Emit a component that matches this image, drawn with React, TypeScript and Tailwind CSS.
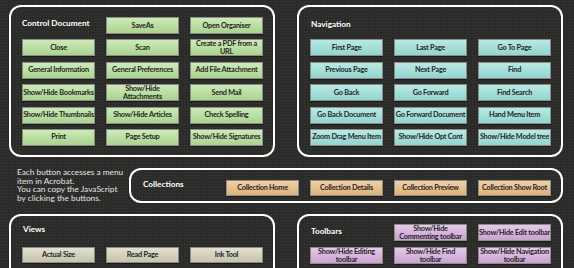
import React from 'react'

type Tone = 'green' | 'cyan' | 'orange' | 'purple' | 'beige'

const tones: Record<Tone, string> = {
  green: 'bg-gradient-to-b from-[#cdeab8] to-[#a9d38f]',
  cyan: 'bg-gradient-to-b from-[#b8e9e5] to-[#93d4cf]',
  orange: 'bg-gradient-to-b from-[#f0d1a8] to-[#ddb07a]',
  purple: 'bg-gradient-to-b from-[#e6c9ea] to-[#c9a2d1]',
  beige: 'bg-gradient-to-b from-[#e2e0cf] to-[#c6c4ae]',
}

const Btn: React.FC<{ label: React.ReactNode; tone: Tone; h?: string }> = ({
  label,
  tone,
  h = 'h-[17px]',
}) => (
  <button
    className={`w-[73px] ${h} ${tones[tone]} border border-[#8c8c86] shadow-[0_1px_0_#1a1a1a] flex items-center justify-center text-center text-[7.3px] leading-[8px] font-bold text-[#262626] tracking-[-0.25px] whitespace-nowrap overflow-hidden`}
    type="button"
  >
    {label}
  </button>
)

const Title: React.FC<{ children: React.ReactNode }> = ({ children }) => (
  <div className="text-[8.2px] font-bold text-white leading-none">{children}</div>
)

const controlDoc: React.ReactNode[] = [
  'Close',
  'Scan',
  <>Create a PDF from a<br />URL</>,
  'General Information',
  'General Preferences',
  'Add File Attachment',
  'Show/Hide Bookmarks',
  <>Show/Hide<br />Attachments</>,
  'Send Mail',
  'Show/Hide Thumbnails',
  'Show/Hide Articles',
  'Check Spelling',
  'Print',
  'Page Setup',
  'Show/Hide Signatures',
]

const navigation = [
  'First Page',
  'Last Page',
  'Go To Page',
  'Previous Page',
  'Next Page',
  'Find',
  'Go Back',
  'Go Forward',
  'Find Search',
  'Go Back Document',
  'Go Forward Document',
  'Hand Menu Item',
  'Zoom Drag Menu Item',
  'Show/Hide Opt Cont',
  'Show/Hide Model tree',
]

const App: React.FC = () => {
  return (
    <div
      className="w-[574px] h-[268px] overflow-hidden bg-[#2b2b29] bg-[radial-gradient(#3a3a37_0.7px,transparent_0.8px)] bg-[length:3px_3px] pl-[9px] pt-[5px] flex flex-col"
      style={{ fontFamily: 'Lato, "Open Sans", sans-serif' }}
    >
      {/* Top row */}
      <div className="flex gap-[22px] h-[152px] shrink-0">
        {/* Control Document */}
        <div className="w-[266px] h-[152px] border-2 border-white rounded-[12px] pt-[10px] pl-[11px]">
          <div className="grid grid-cols-[73px_73px_73px] gap-x-[11px] gap-y-[5.4px]">
            <div className="h-[17px] flex items-center pb-[5px]">
              <Title>Control Document</Title>
            </div>
            <Btn label="SaveAs" tone="green" />
            <Btn label="Open Organiser" tone="green" />
            {controlDoc.map((l, i) => (
              <Btn key={i} label={l} tone="green" />
            ))}
          </div>
        </div>

        {/* Navigation */}
        <div className="w-[266px] h-[152px] border-2 border-white rounded-[12px] pt-[10px] pl-[11px]">
          <div className="grid grid-cols-[73px_73px_73px] gap-x-[11px] gap-y-[5.4px]">
            <div className="h-[17px] flex items-center pb-[3px] pl-[1px]">
              <Title>Navigation</Title>
            </div>
            <div />
            <div />
            {navigation.map((l) => (
              <Btn key={l} label={l} tone="cyan" />
            ))}
          </div>
        </div>
      </div>

      {/* Middle row */}
      <div className="flex mt-[11px] pr-[11px] h-[35px] shrink-0">
        <div className="pl-[8px] text-[8.3px] leading-[8.7px] text-[#e4e4e4] w-[120px]">
          Each button accesses a menu
          <br />
          item in Acrobat.
          <br />
          You can copy the JavaScript
          <br />
          by clicking the buttons.
        </div>
        <div className="ml-auto w-[434px] h-[35px] border-2 border-white rounded-[12px] flex items-center pl-[12px] pt-[4px]">
          <div className="w-[83px] -mt-[7px]">
            <Title>Collections</Title>
          </div>
          <div className="flex gap-[11px]">
            <Btn label="Collection Home" tone="orange" h="h-[16px]" />
            <Btn label="Collection Details" tone="orange" h="h-[16px]" />
            <Btn label="Collection Preview" tone="orange" h="h-[16px]" />
            <Btn label="Collection Show Root" tone="orange" h="h-[16px]" />
          </div>
        </div>
      </div>

      {/* Bottom row */}
      <div className="flex gap-[22px] mt-[11px]">
        {/* Views */}
        <div className="w-[266px] h-[80px] border-2 border-white rounded-[12px] pt-[9px] pl-[12px]">
          <Title>Views</Title>
          <div className="flex gap-[11px] mt-[14px] -ml-[1px]">
            <Btn label="Actual Size" tone="beige" h="h-[16px]" />
            <Btn label="Read Page" tone="beige" h="h-[16px]" />
            <Btn label="Ink Tool" tone="beige" h="h-[16px]" />
          </div>
        </div>

        {/* Toolbars */}
        <div className="w-[266px] h-[80px] border-2 border-white rounded-[12px] pt-[8px] pl-[11px]">
          <div className="grid grid-cols-[73px_73px_73px] gap-x-[11px] gap-y-[6px]">
            <div className="h-[17px] flex items-center pl-[1px] pb-[2px]">
              <Title>Toolbars</Title>
            </div>
            <Btn label={<>Show/Hide<br />Commenting toolbar</>} tone="purple" />
            <Btn label="Show/Hide Edit toolbar" tone="purple" />
            <Btn label={<>Show/Hide Editing<br />toolbar</>} tone="purple" />
            <Btn label={<>Show/Hide Find<br />toolbar</>} tone="purple" />
            <Btn label={<>Show/Hide Navigation<br />toolbar</>} tone="purple" />
          </div>
        </div>
      </div>
    </div>
  )
}

export default App
